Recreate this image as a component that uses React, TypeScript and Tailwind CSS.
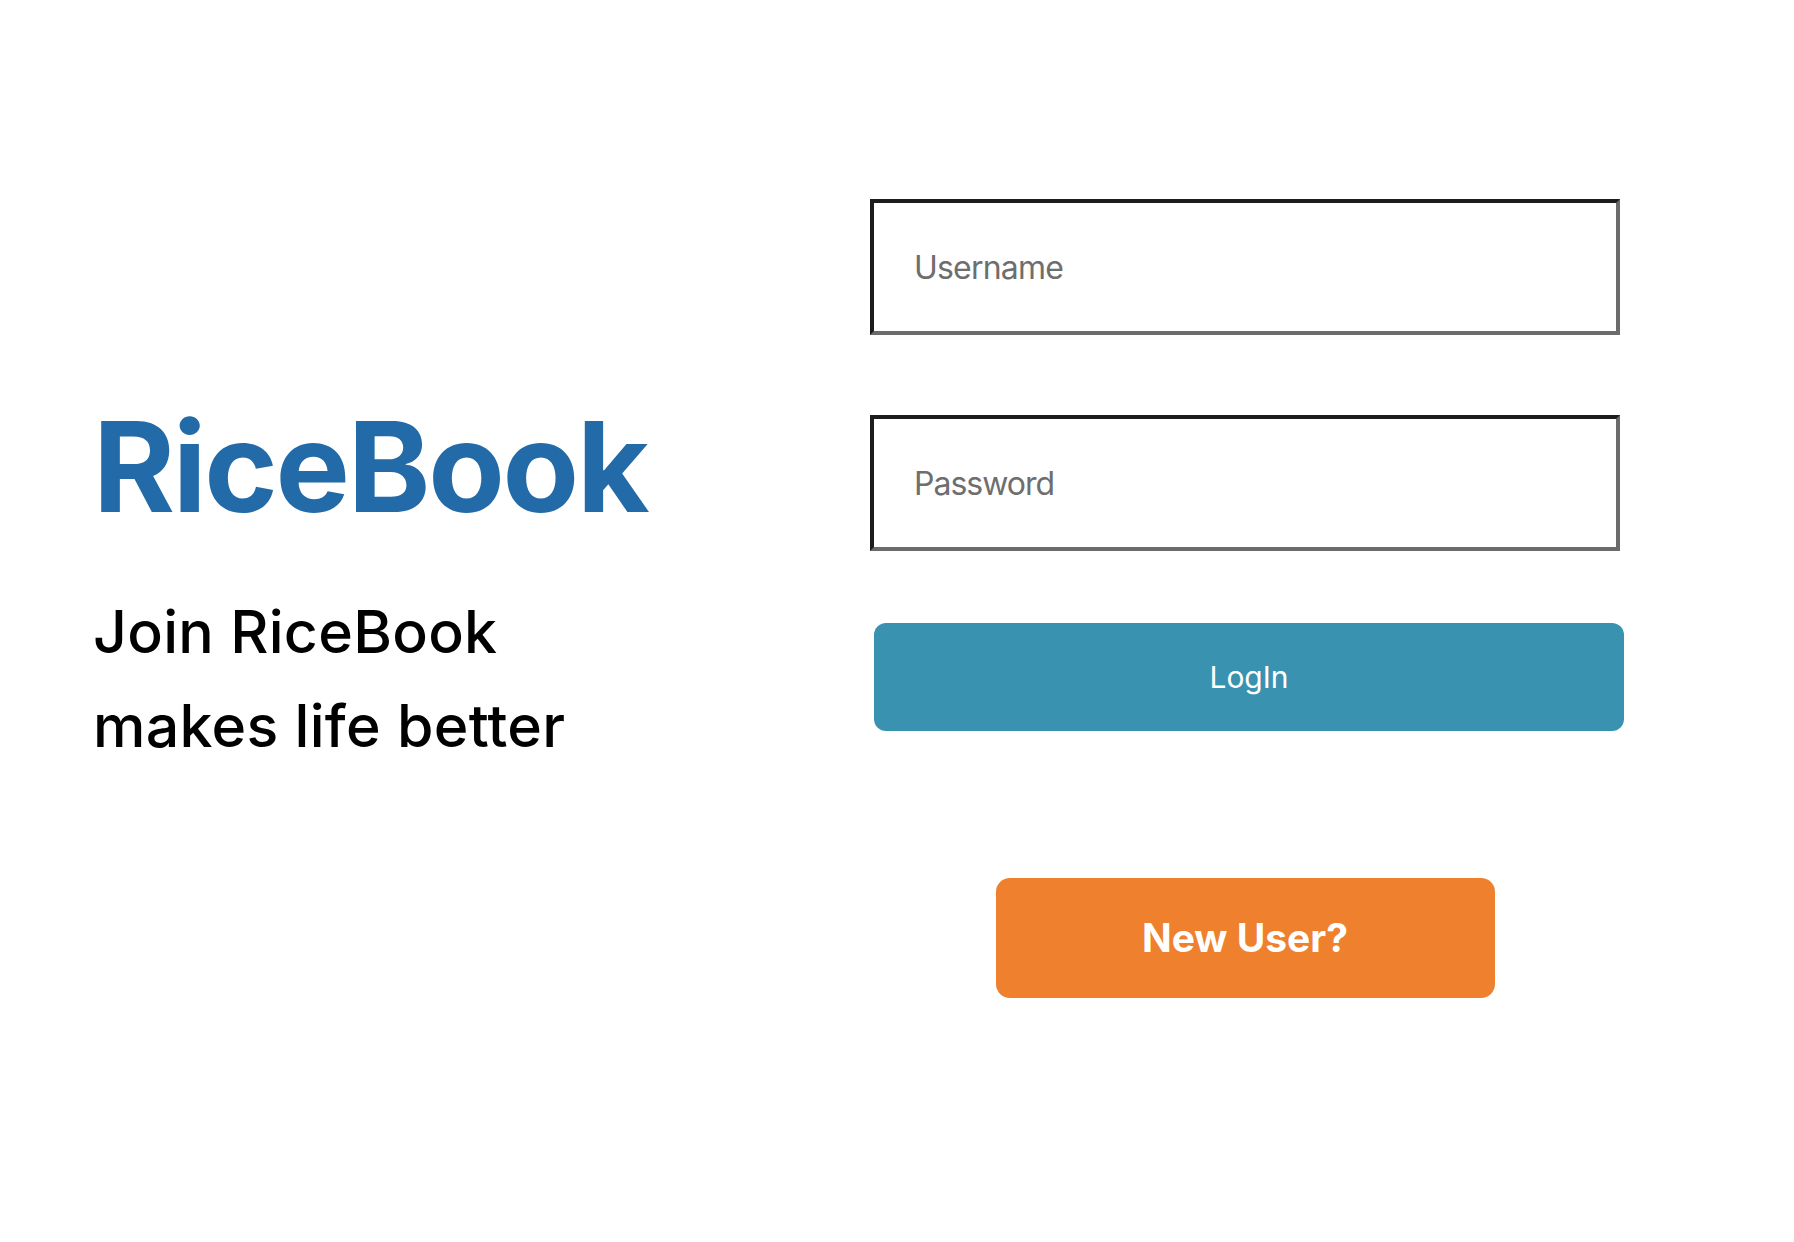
import { useState } from 'react'

export default function App() {
  const [username, setUsername] = useState('')
  const [password, setPassword] = useState('')

  return (
    <div className="min-h-screen bg-white flex items-start pl-[93px] pt-[199px] font-['Inter','Liberation_Sans',sans-serif]">
      <div className="w-[777px] mt-[205px]">
        <h1 className="text-[125px] leading-none font-bold text-[#226ba8] tracking-[-2.3px]">RiceBook</h1>
        <div className="mt-[56px] text-[59px] leading-[94px] font-medium text-black tracking-[0.3px]">
          <p>Join RiceBook</p>
          <p>makes life better</p>
        </div>
      </div>

      <div className="w-[754px] flex flex-col">
        <input
          type="text"
          placeholder="Username"
          value={username}
          onChange={(e) => setUsername(e.target.value)}
          className="w-[750px] h-[136px] border-4 border-t-[#1c1c1c] border-l-[#1c1c1c] border-b-[#6b6b6b] border-r-[#6b6b6b] pl-[40px] text-[32px] tracking-[-0.8px] text-black placeholder:text-[#6e6e6e] outline-none"
        />
        <input
          type="password"
          placeholder="Password"
          value={password}
          onChange={(e) => setPassword(e.target.value)}
          className="mt-[80px] w-[750px] h-[136px] border-4 border-t-[#1c1c1c] border-l-[#1c1c1c] border-b-[#6b6b6b] border-r-[#6b6b6b] pl-[40px] text-[32px] tracking-[-1px] text-black placeholder:text-[#6e6e6e] outline-none"
        />
        <button className="mt-[72px] ml-[4px] w-[750px] h-[108px] rounded-[12px] bg-[#3892b0] text-white text-[30px]">
          LogIn
        </button>
        <div className="w-[750px] flex justify-center mt-[147px]">
          <button className="w-[499px] h-[120px] rounded-[14px] bg-[#ef802d] text-white text-[39px] font-bold">
            New User?
          </button>
        </div>
      </div>
    </div>
  )
}
